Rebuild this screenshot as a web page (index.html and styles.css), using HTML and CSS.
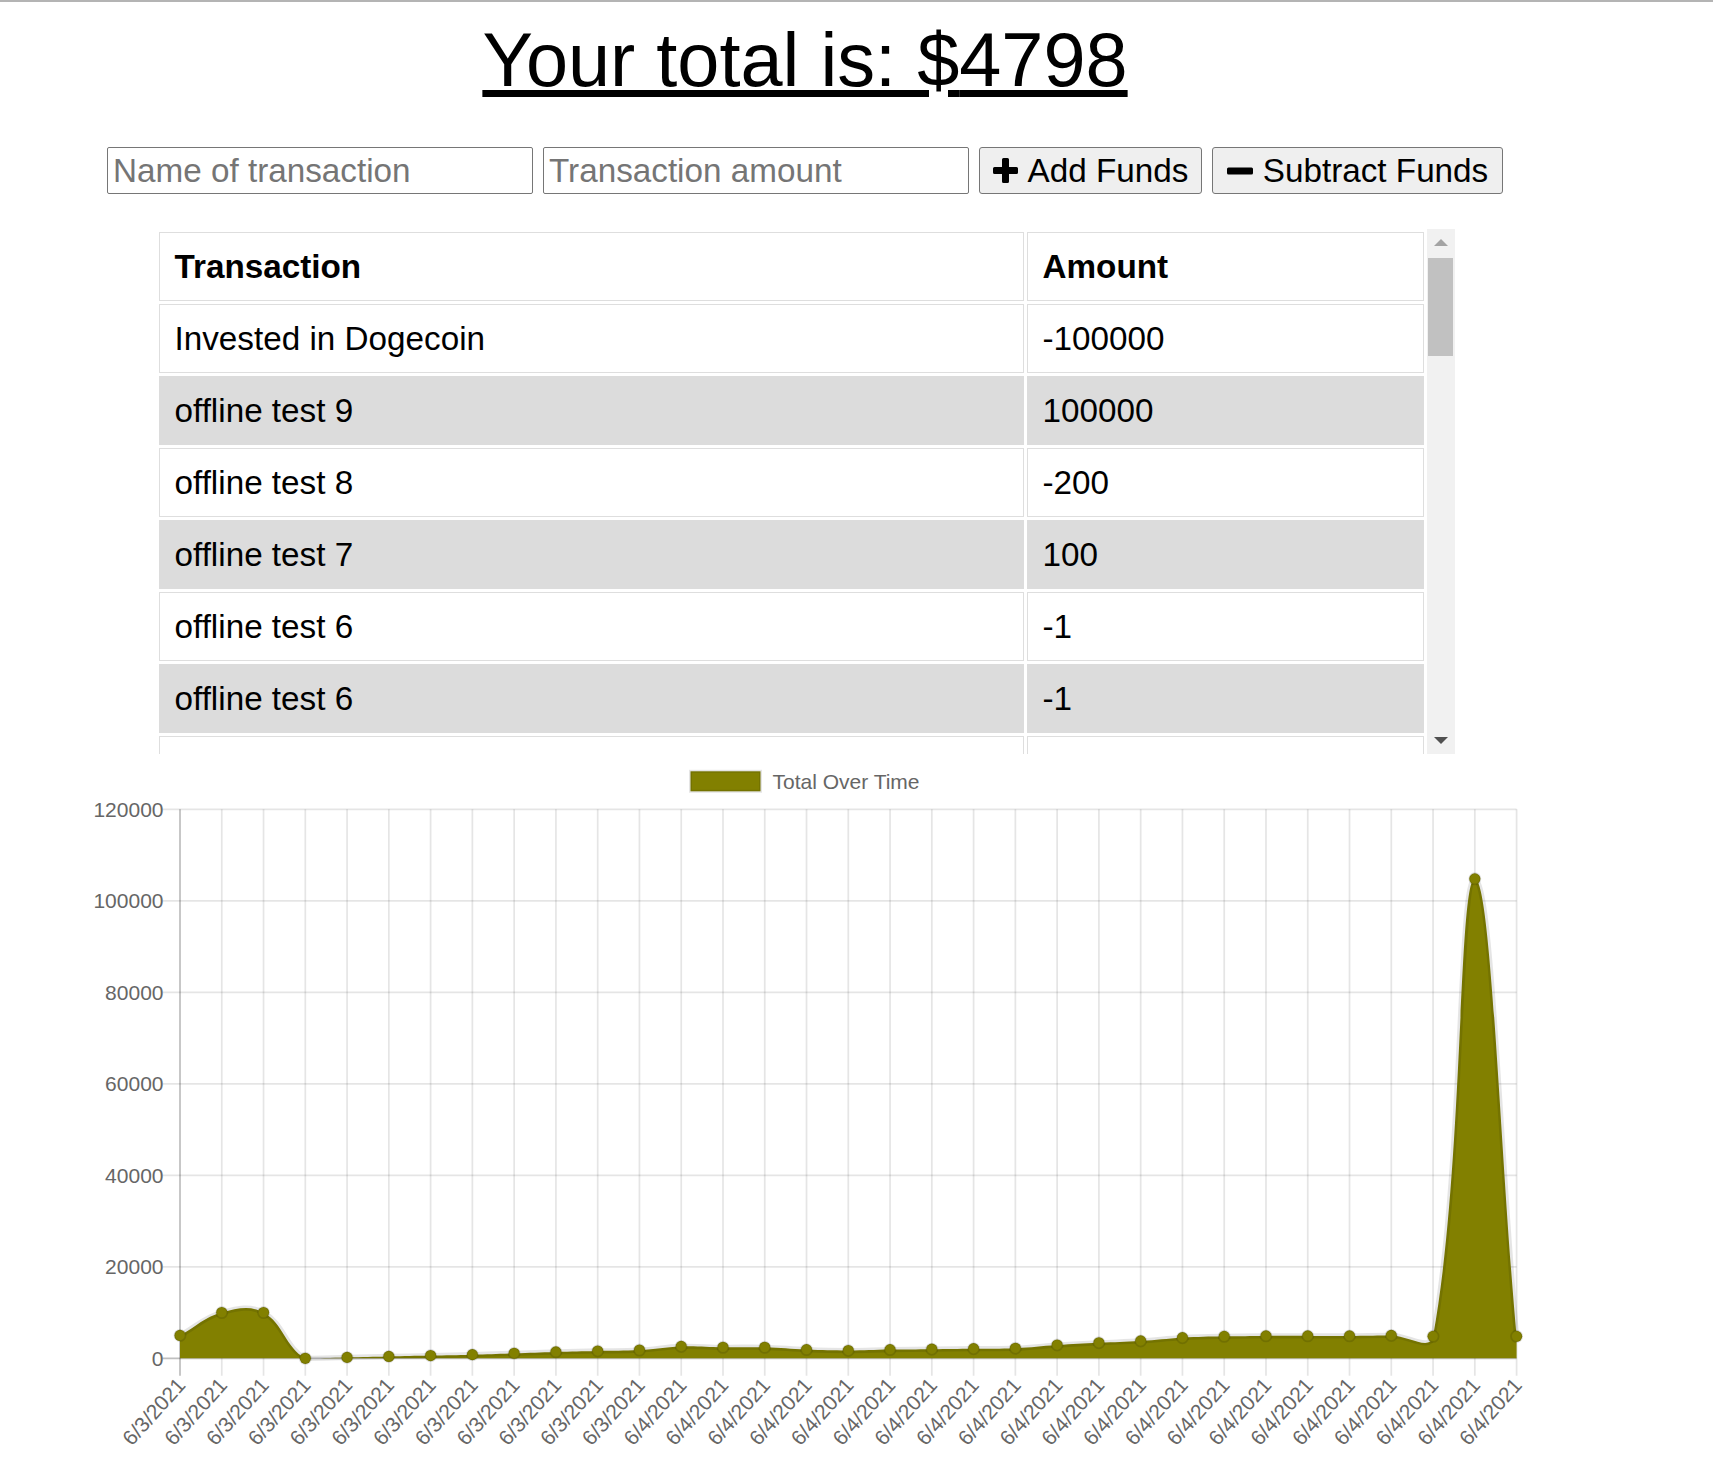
FILE: index.html
```html
<!DOCTYPE html>
<html lang="en">
<head>
<meta charset="utf-8">
<title>Budget Tracker</title>
<link rel="stylesheet" href="styles.css">
</head>
<body>
<div class="topline"></div>
<main class="page">
  <h1 class="total">Your total is: $<span id="total">4798</span></h1>
  <form class="entry">
    <input class="field" type="text" placeholder="Name of transaction">
    <input class="field" type="text" placeholder="Transaction amount">
    <button class="btn btn-add" type="button">
      <svg class="icon icon-plus" viewBox="0 0 25 25" width="25" height="25"><path d="M9 1.5a1.5 1.5 0 0 1 1.5-1.5h4a1.5 1.5 0 0 1 1.5 1.5V9h7.5A1.5 1.5 0 0 1 25 10.5v4a1.5 1.5 0 0 1-1.5 1.5H16v7.5a1.5 1.5 0 0 1-1.5 1.5h-4A1.5 1.5 0 0 1 9 23.5V16H1.5A1.5 1.5 0 0 1 0 14.5v-4A1.5 1.5 0 0 1 1.5 9H9z"/></svg>
      <span>Add Funds</span>
    </button>
    <button class="btn btn-sub" type="button">
      <svg class="icon icon-minus" viewBox="0 0 26 8" width="26" height="8"><rect x="0" y="0.5" width="26" height="7" rx="1.5"/></svg>
      <span>Subtract Funds</span>
    </button>
  </form>
  <div class="table-wrap">
    <div class="table-clip">
      <table class="tx">
        <thead>
          <tr><th class="col-name">Transaction</th><th class="col-amount">Amount</th></tr>
        </thead>
        <tbody>
          <tr><td>Invested in Dogecoin</td><td>-100000</td></tr>
          <tr><td>offline test 9</td><td>100000</td></tr>
          <tr><td>offline test 8</td><td>-200</td></tr>
          <tr><td>offline test 7</td><td>100</td></tr>
          <tr><td>offline test 6</td><td>-1</td></tr>
          <tr><td>offline test 6</td><td>-1</td></tr>
          <tr><td>&nbsp;</td><td>&nbsp;</td></tr>
        </tbody>
      </table>
    </div>
    <div class="scrollbar">
      <div class="sb-btn"><span class="tri-up"></span></div>
      <div class="sb-track"><div class="sb-thumb"></div></div>
      <div class="sb-btn"><span class="tri-down"></span></div>
    </div>
  </div>
</main>
<svg id="chart" class="chart" viewBox="0 754 1713 725" width="1713" height="725">
  <g class="legend">
    <rect x="690.5" y="771.3" width="70" height="20" class="legend-box"/>
    <text x="772.5" y="788.5" class="legend-text">Total Over Time</text>
  </g>
</svg>
<script src="script.js"></script>
</body>
</html>
```

FILE: styles.css
```css
html, body {
  margin: 0;
  padding: 0;
  background: #fff;
  overflow: hidden;
}

body {
  width: 1713px;
  height: 1483px;
  font-family: "Liberation Sans", Arial, sans-serif;
  color: #000;
}

.topline {
  height: 2px;
  background: #b4b4b4;
}

.page {
  width: 1610px;
}

.total {
  margin: 15px 0 0;
  font-size: 75.7px;
  font-weight: normal;
  line-height: 86px;
  text-align: center;
  text-decoration: underline;
}

.entry {
  display: flex;
  justify-content: center;
  gap: 10px;
  margin: 44px 0 0;
  height: 47px;
}

.field {
  box-sizing: border-box;
  width: 426px;
  height: 47px;
  margin: 0;
  padding: 0 5px;
  border: 1px solid #767676;
  border-radius: 2px;
  background: #fff;
  font: 33.25px "Liberation Sans", Arial, sans-serif;
  color: #000;
}

.field::placeholder {
  color: #757575;
}

.btn {
  box-sizing: border-box;
  height: 47px;
  margin: 0;
  display: flex;
  align-items: center;
  justify-content: center;
  gap: 10px;
  padding: 0 12px;
  border: 1px solid #767676;
  border-radius: 3px;
  background: #efefef;
  font: 33.25px "Liberation Sans", Arial, sans-serif;
  color: #000;
}

.btn-add {
  width: 223px;
}

.btn-sub {
  width: 291px;
}

.icon {
  display: block;
  fill: #000;
  flex: none;
}

.table-wrap {
  display: flex;
  width: 1299px;
  height: 525px;
  margin: 35px auto 0;
}

.table-clip {
  flex: 1;
  overflow: hidden;
}

.tx {
  width: 1271px;
  table-layout: fixed;
  border-collapse: separate;
  border-spacing: 3.5px;
  font-size: 33.25px;
}

.tx th,
.tx td {
  box-sizing: border-box;
  height: 69px;
  padding: 0 15px;
  border: 1px solid #dedede;
  line-height: 38px;
  text-align: left;
  white-space: nowrap;
}

.tx th {
  font-weight: bold;
}

.col-name {
  width: 865px;
}

.tx tbody tr:nth-child(even) td {
  background: #dcdcdc;
  border-color: #dcdcdc;
}

.scrollbar {
  width: 28px;
  display: flex;
  flex-direction: column;
  background: #f1f1f1;
}

.sb-btn {
  height: 27.5px;
  display: flex;
  align-items: center;
  justify-content: center;
  flex: none;
}

.tri-up {
  width: 0;
  height: 0;
  border-left: 7px solid transparent;
  border-right: 7px solid transparent;
  border-bottom: 7px solid #a3a3a3;
}

.tri-down {
  width: 0;
  height: 0;
  border-left: 7px solid transparent;
  border-right: 7px solid transparent;
  border-top: 7px solid #505050;
}

.sb-track {
  flex: 1;
  padding: 1.5px 1.5px 0;
}

.sb-thumb {
  height: 98px;
  background: #c1c1c1;
}

.chart {
  display: block;
}

.chart .gl {
  stroke: rgba(0, 0, 0, 0.1);
  stroke-width: 1.75;
}

.chart .zl {
  stroke: rgba(0, 0, 0, 0.25);
  stroke-width: 1.75;
}

.chart .ytick,
.chart .xtick,
.chart .legend-text {
  font-family: "Liberation Sans", Arial, sans-serif;
  font-size: 21px;
  fill: #666;
}

.chart .ytick,
.chart .xtick {
  text-anchor: end;
}

.chart .legend-box {
  fill: #828000;
  stroke: rgba(0, 0, 0, 0.1);
  stroke-width: 3;
}

.chart .area {
  fill: #828000;
  stroke: none;
}

.chart .curve {
  fill: none;
  stroke: rgba(0, 0, 0, 0.1);
  stroke-width: 5.25;
}

.chart .pt {
  fill: #828000;
  stroke: rgba(0, 0, 0, 0.12);
  stroke-width: 1.75;
}
```

FILE: script.js
```js
(function () {
  var NS = 'http://www.w3.org/2000/svg';
  var svg = document.getElementById('chart');
  var data = [5000, 10000, 10000, 0, 200, 400, 600, 800, 1100, 1400, 1600, 1800,
    2600, 2400, 2400, 1900, 1700, 1900, 2000, 2100, 2200, 2900, 3400, 3800, 4500,
    4800, 4900, 4899, 4898, 4998, 4798, 104798, 4798];
  var n = data.length;
  var L = 180, R = 1516.6, T = 809.3, B = 1358.3, MAX = 120000;
  var step = (R - L) / (n - 1);

  function X(i) { return L + i * step; }
  function Y(v) { return B - v * (B - T) / MAX; }
  function el(name, attrs, parent) {
    var e = document.createElementNS(NS, name);
    for (var k in attrs) { e.setAttribute(k, attrs[k]); }
    (parent || svg).appendChild(e);
    return e;
  }

  var legend = svg.querySelector('.legend');
  var grid = el('g', { 'class': 'grid' });
  svg.insertBefore(grid, legend);

  var i, v;
  for (i = 0; i < n; i++) {
    el('line', { x1: X(i), x2: X(i), y1: T, y2: B + 17.5, 'class': i === 0 ? 'zl' : 'gl' }, grid);
  }
  for (v = 0; v <= MAX; v += 20000) {
    el('line', { x1: L - 17.5, x2: R, y1: Y(v), y2: Y(v), 'class': v === 0 ? 'zl' : 'gl' }, grid);
    var t = el('text', { x: 163.5, y: Y(v) + 7.5, 'class': 'ytick' }, grid);
    t.textContent = String(v);
  }
  for (i = 0; i < n; i++) {
    var lab = el('text', {
      transform: 'translate(' + (X(i) + 1) + ' 1381) rotate(-48)',
      dy: '7.5',
      'class': 'xtick'
    }, grid);
    lab.textContent = i < 12 ? '6/3/2021' : '6/4/2021';
  }

  var pts = data.map(function (val, idx) { return { x: X(idx), y: Y(val) }; });
  var tension = 0.4;
  function cap(a, lo, hi) { return Math.max(lo, Math.min(hi, a)); }
  pts.forEach(function (p, idx) {
    var prev = pts[idx - 1] || p;
    var next = pts[idx + 1] || p;
    var d01 = Math.hypot(p.x - prev.x, p.y - prev.y);
    var d12 = Math.hypot(next.x - p.x, next.y - p.y);
    var s01 = d01 / (d01 + d12);
    var s12 = d12 / (d01 + d12);
    if (isNaN(s01)) { s01 = 0; }
    if (isNaN(s12)) { s12 = 0; }
    var fa = tension * s01, fb = tension * s12;
    p.px = cap(p.x - fa * (next.x - prev.x), L, R);
    p.py = cap(p.y - fa * (next.y - prev.y), T, B);
    p.nx = cap(p.x + fb * (next.x - prev.x), L, R);
    p.ny = cap(p.y + fb * (next.y - prev.y), T, B);
  });

  var d = 'M' + pts[0].x + ',' + pts[0].y;
  for (i = 1; i < n; i++) {
    d += ' C' + pts[i - 1].nx + ',' + pts[i - 1].ny + ' ' + pts[i].px + ',' + pts[i].py + ' ' + pts[i].x + ',' + pts[i].y;
  }
  var series = el('g', { 'class': 'series' });
  svg.insertBefore(series, legend);
  el('path', { d: d + ' L' + R + ',' + B + ' L' + L + ',' + B + ' Z', 'class': 'area' }, series);
  el('path', { d: d, 'class': 'curve' }, series);
  pts.forEach(function (p) {
    el('circle', { cx: p.x, cy: p.y, r: 5.6, 'class': 'pt' }, series);
  });
})();
```
